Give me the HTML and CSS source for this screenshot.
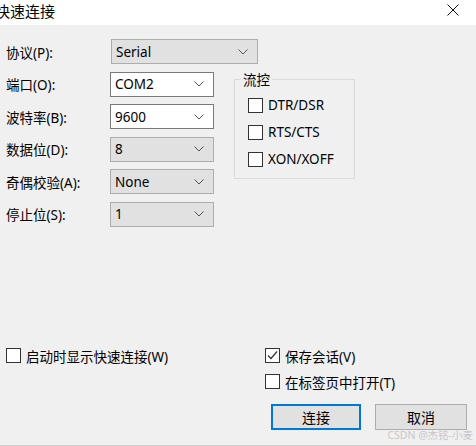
FILE: index.html
```html
<!DOCTYPE html>
<html lang="zh-CN">
<head>
<meta charset="utf-8">
<title>快速连接</title>
<link rel="stylesheet" href="styles.css">
</head>
<body>
<div class="window">
  <div class="titlebar">
    <span class="title">快速连接</span>
    <svg class="close" width="12" height="12" viewBox="0 0 12 12"><path d="M0.5 0.5 L11.5 11.5 M11.5 0.5 L0.5 11.5" stroke="#111" stroke-width="1" fill="none"/></svg>
  </div>
  <div class="content">
    <div class="row">
      <span class="lbl lbl-first">协议(P):</span>
      <div class="combo combo-wide disabled"><span>Serial</span><svg class="chev" width="10" height="6" viewBox="0 0 10 6"><path d="M0.5 0.5 L5 5 L9.5 0.5" stroke="#555" stroke-width="1" fill="none"/></svg></div>
    </div>
    <div class="mid">
      <div class="fields">
        <div class="row">
          <span class="lbl">端口(O):</span>
          <div class="combo edit"><span>COM2</span><svg class="chev" width="10" height="6" viewBox="0 0 10 6"><path d="M0.5 0.5 L5 5 L9.5 0.5" stroke="#555" stroke-width="1" fill="none"/></svg></div>
        </div>
        <div class="row">
          <span class="lbl">波特率(B):</span>
          <div class="combo edit"><span>9600</span><svg class="chev" width="10" height="6" viewBox="0 0 10 6"><path d="M0.5 0.5 L5 5 L9.5 0.5" stroke="#555" stroke-width="1" fill="none"/></svg></div>
        </div>
        <div class="row">
          <span class="lbl">数据位(D):</span>
          <div class="combo disabled"><span>8</span><svg class="chev" width="10" height="6" viewBox="0 0 10 6"><path d="M0.5 0.5 L5 5 L9.5 0.5" stroke="#555" stroke-width="1" fill="none"/></svg></div>
        </div>
        <div class="row">
          <span class="lbl">奇偶校验(A):</span>
          <div class="combo disabled"><span>None</span><svg class="chev" width="10" height="6" viewBox="0 0 10 6"><path d="M0.5 0.5 L5 5 L9.5 0.5" stroke="#555" stroke-width="1" fill="none"/></svg></div>
        </div>
        <div class="row">
          <span class="lbl">停止位(S):</span>
          <div class="combo disabled"><span>1</span><svg class="chev" width="10" height="6" viewBox="0 0 10 6"><path d="M0.5 0.5 L5 5 L9.5 0.5" stroke="#555" stroke-width="1" fill="none"/></svg></div>
        </div>
      </div>
      <fieldset class="group">
        <legend>流控</legend>
        <div class="check"><span class="box"></span><span>DTR/DSR</span></div>
        <div class="check"><span class="box"></span><span>RTS/CTS</span></div>
        <div class="check"><span class="box"></span><span>XON/XOFF</span></div>
      </fieldset>
    </div>
    <div class="bottom">
      <div class="bottom-left">
        <div class="check"><span class="box"></span><span>启动时显示快速连接(W)</span></div>
      </div>
      <div class="bottom-right">
        <div class="check"><span class="box"><svg width="13" height="13" viewBox="0 0 13 13"><path d="M2 6.5 L5 9.5 L11 2.5" stroke="#333" stroke-width="1.2" fill="none"/></svg></span><span>保存会话(V)</span></div>
        <div class="check"><span class="box"></span><span>在标签页中打开(T)</span></div>
        <div class="buttons">
          <div class="btn btn-default">连接</div>
          <div class="btn btn-cancel">取消</div>
        </div>
      </div>
    </div>
  </div>
  <div class="watermark">CSDN @杰铭-小麦</div>
</div>
</body>
</html>
```

FILE: styles.css
```css
html, body {
  margin: 0;
  padding: 0;
  background: #f0f0f0;
}

.window {
  position: relative;
  width: 476px;
  height: 446px;
  display: flex;
  flex-direction: column;
  font-family: "Segoe UI", "Noto Sans", "Noto Sans CJK SC", sans-serif;
  font-size: 13.5px;
  color: #000;
  overflow: hidden;
  background: #f7f7f7;
}

.titlebar {
  height: 25px;
  background: #fff;
  display: flex;
  align-items: center;
  justify-content: space-between;
  flex-shrink: 0;
}

.title {
  font-family: "Noto Sans CJK SC", sans-serif;
  font-size: 15px;
  margin-left: -5px;
  margin-top: -4px;
}

.close {
  margin-right: 17px;
  margin-top: -6px;
}

.content {
  flex: 1;
  background: #f0f0f0;
  border-bottom: 1px solid #cfcfcf;
  display: flex;
  flex-direction: column;
  padding: 14px 0 15px 6px;
}

.row {
  display: flex;
  align-items: center;
  height: 25px;
}

.lbl {
  width: 104px;
  flex-shrink: 0;
  white-space: nowrap;
}

.lbl-first {
  width: 105px;
}

.combo {
  box-sizing: border-box;
  width: 104px;
  height: 25px;
  display: flex;
  align-items: center;
  justify-content: space-between;
  padding: 0 9px 0 4px;
}

.combo-wide {
  width: 147px;
}

.combo.disabled {
  background: #e1e1e1;
  border: 1px solid #adadad;
}

.combo.edit {
  background: #fff;
  border: 1px solid #7a7a7a;
}

.mid {
  display: flex;
  align-items: flex-start;
  margin-top: 7.6px;
}

.fields {
  display: flex;
  flex-direction: column;
  gap: 7.6px;
}

.group {
  margin: 0 0 0 20px;
  width: 121px;
  box-sizing: border-box;
  border: 1px solid #dcdcdc;
  padding: 0 0 11px 13px;
  display: flex;
  flex-direction: column;
  gap: 12px;
}

.group legend {
  padding: 0 2px;
  margin-left: -7px;
  line-height: 16px;
  margin-bottom: 10px;
}

.check {
  display: flex;
  align-items: center;
  height: 15px;
  white-space: nowrap;
}

.box {
  box-sizing: border-box;
  width: 15px;
  height: 15px;
  border: 1px solid #333;
  background: #fff;
  margin-right: 5px;
  flex-shrink: 0;
  display: flex;
  align-items: center;
  justify-content: center;
}

.bottom {
  margin-top: auto;
  display: flex;
  align-items: flex-start;
}

.bottom-right {
  margin-left: auto;
  width: 211px;
  display: flex;
  flex-direction: column;
}

.bottom-right .check + .check {
  margin-top: 11px;
}

.buttons {
  display: flex;
  gap: 14px;
  margin-top: 15px;
  margin-left: 6px;
}

.btn {
  box-sizing: border-box;
  height: 26px;
  display: flex;
  align-items: center;
  justify-content: center;
  background: #e1e1e1;
  font-size: 14px;
}

.btn-default {
  width: 90px;
  border: 2px solid #0078d7;
}

.btn-cancel {
  width: 92px;
  border: 1px solid #adadad;
}

.watermark {
  position: absolute;
  right: 3px;
  bottom: 5px;
  font-size: 10.5px;
  color: #c8c8c8;
  line-height: 12px;
}
```
